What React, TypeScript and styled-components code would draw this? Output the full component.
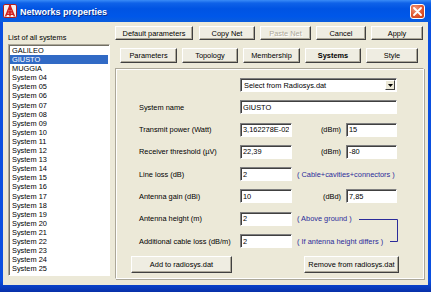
import React from 'react'
import styled, { createGlobalStyle } from 'styled-components'

const systems = [
    'GALILEO',
    'GIUSTO',
    'MUGGIA',
    ...Array.from({ length: 22 }, (_, i) => `System ${String(i + 4).padStart(2, '0')}`),
]

const GlobalStyle = createGlobalStyle`
    html, body {
        margin: 0;
        padding: 0;
    }
    body {
        width: 431px;
        height: 292px;
        overflow: hidden;
        font-family: "Liberation Sans", Arial, sans-serif;
    }
`

const App: React.FC = () => {
    return (
        <Window>
            <GlobalStyle />
            <TitleBar>
                <AppIcon />
                <Title>Networks properties</Title>
                <CloseButton>
                    <svg width="9" height="9" viewBox="0 0 9 9">
                        <path d="M1 1 L8 8 M8 1 L1 8" stroke="#fff" strokeWidth="1.8" strokeLinecap="round" />
                    </svg>
                </CloseButton>
            </TitleBar>
            <Body>
                <LeftColumn>
                    <Caption>List of all systems</Caption>
                    <SystemList>
                        {systems.map((name) => (
                            <ListItem key={name} $selected={name === 'GIUSTO'}>
                                {name}
                            </ListItem>
                        ))}
                    </SystemList>
                </LeftColumn>
                <RightColumn>
                    <ButtonRow>
                        <Button $w={78}>Default parameters</Button>
                        <Button $w={56}>Copy Net</Button>
                        <Button $w={51} $disabled>Paste Net</Button>
                        <Button $w={50}>Cancel</Button>
                        <Button $w={52}>Apply</Button>
                    </ButtonRow>
                    <TabRow>
                        <Button $w={57} $h={15}>Parameters</Button>
                        <Button $w={56} $h={15}>Topology</Button>
                        <Button $w={57} $h={15}>Membership</Button>
                        <Button $w={56} $h={15} $bold>Systems</Button>
                        <Button $w={52} $h={15}>Style</Button>
                    </TabRow>
                    <Panel>
                        <Form>
                            <Combo>
                                <span>Select from Radiosys.dat</span>
                                <ComboArrow>
                                    <svg width="5" height="3" viewBox="0 0 5 3">
                                        <path d="M0 0 H5 L2.5 3 Z" fill="#000" />
                                    </svg>
                                </ComboArrow>
                            </Combo>

                            <Label>System name</Label>
                            <Field $span={3} readOnly value="GIUSTO" />

                            <Label>Transmit power (Watt)</Label>
                            <Field readOnly value="3,162278E-02" />
                            <Unit>(dBm)</Unit>
                            <Field readOnly value="15" />

                            <Label>Receiver threshold (µV)</Label>
                            <Field readOnly value="22,39" />
                            <Unit>(dBm)</Unit>
                            <Field readOnly value="-80" />

                            <Label>Line loss (dB)</Label>
                            <Field readOnly value="2" />
                            <Note $row={5}>( Cable+cavities+connectors )</Note>

                            <Label>Antenna gain (dBi)</Label>
                            <Field readOnly value="10" />
                            <Unit>(dBd)</Unit>
                            <Field readOnly value="7,85" />

                            <Label>Antenna height (m)</Label>
                            <Field readOnly value="2" />
                            <Note $row={7}>( Above ground )</Note>

                            <Label>Additional cable loss (dB/m)</Label>
                            <Field readOnly value="2" />
                            <Note $row={8}>( If antenna height differs )</Note>

                            <Bracket width="40" height="37" viewBox="0 0 40 37">
                                <path d="M0 7.5 H38.5 V29.5 H31" fill="none" stroke="#2B2B9A" strokeWidth="1" />
                            </Bracket>
                        </Form>
                        <PanelButtons>
                            <Button $w={101} $h={17}>Add to radiosys.dat</Button>
                            <Button $w={95} $h={17}>Remove from radiosys.dat</Button>
                        </PanelButtons>
                    </Panel>
                </RightColumn>
            </Body>
        </Window>
    )
}

const AppIcon: React.FC = () => (
    <svg width="14" height="14" viewBox="0 0 14 14">
        <rect x="0.5" y="0.5" width="13" height="13" rx="1.5" fill="#F4F0F0" stroke="#B02020" />
        <path d="M7 1.5 L2.5 12.5 M7 1.5 L11.5 12.5 M4.3 8 H9.7 M3.5 10.3 H10.5 M7 1.5 V12.5" stroke="#D21E1E" strokeWidth="1.5" fill="none" />
        <circle cx="7" cy="2" r="1.2" fill="#D21E1E" />
    </svg>
)

export default App

const Window = styled.div`
    width: 431px;
    height: 292px;
    display: flex;
    flex-direction: column;
    background: linear-gradient(to bottom, #0A4FE0 0%, #0A4FE0 96%, #0830A8 100%);
`

const TitleBar = styled.div`
    height: 22px;
    flex-shrink: 0;
    display: flex;
    align-items: center;
    gap: 3px;
    padding: 0 6px 0 3px;
    background: linear-gradient(
        to bottom,
        #3A8CF7 0%,
        #0F62E8 14%,
        #0054E3 40%,
        #0057E9 75%,
        #0A5DDD 100%
    );
`

const Title = styled.div`
    flex: 1;
    color: #fff;
    font: 700 9px "Liberation Sans", Arial, sans-serif;
    text-shadow: 1px 1px 0 #0B2F8C;
    margin-top: 1px;
`

const CloseButton = styled.div`
    width: 15px;
    height: 15px;
    box-sizing: border-box;
    border: 1px solid #fff;
    border-radius: 3px;
    display: flex;
    align-items: center;
    justify-content: center;
    background: radial-gradient(circle at 35% 30%, #F09A7E 0%, #E0552E 55%, #C73A14 100%);
`

const Body = styled.div`
    flex: 1;
    display: flex;
    margin: 0 3px 7px 3px;
    padding-top: 4px;
    background: #ECE9D8;
`

const LeftColumn = styled.div`
    width: 102px;
    margin-left: 5px;
    padding-top: 7px;
    display: flex;
    flex-direction: column;
`

const Caption = styled.div`
    font-size: 7.4px;
    line-height: 9px;
    color: #000;
    margin-bottom: 2px;
`

const SystemList = styled.div`
    height: 232px;
    box-sizing: border-box;
    background: #fff;
    border: 1px solid;
    border-color: #ACA899 #fff #fff #ACA899;
    box-shadow: inset 1px 1px 0 #716F64;
    padding: 1px 1px 0 1px;
    overflow: hidden;
`

const ListItem = styled.div<{ $selected?: boolean }>`
    height: 9.1px;
    line-height: 9.1px;
    font-size: 7.4px;
    padding-left: 2px;
    color: ${(p) => (p.$selected ? '#fff' : '#000')};
    background: ${(p) => (p.$selected ? '#316AC5' : 'transparent')};
`

const RightColumn = styled.div`
    width: 309px;
    margin-left: 5px;
    display: flex;
    flex-direction: column;
`

const ButtonRow = styled.div`
    display: flex;
    gap: 5px;
    margin-bottom: 8px;
    & > :first-child {
        margin-right: 1px;
    }
`

const TabRow = styled.div`
    display: flex;
    gap: 5px;
    margin-left: 5px;
    margin-bottom: 5px;
`

const Button = styled.button<{ $w: number; $h?: number; $bold?: boolean; $disabled?: boolean }>`
    width: ${(p) => p.$w}px;
    height: ${(p) => p.$h ?? 14}px;
    flex-shrink: 0;
    box-sizing: border-box;
    padding: 0;
    margin: 0;
    font-family: "Liberation Sans", Arial, sans-serif;
    font-size: 7.4px;
    font-weight: ${(p) => (p.$bold ? 700 : 400)};
    color: ${(p) => (p.$disabled ? '#ACA899' : '#000')};
    text-shadow: ${(p) => (p.$disabled ? '1px 1px 0 #fff' : 'none')};
    background: #EFEDE2;
    border: 1px solid;
    border-color: #FFFFFF #404040 #404040 #FFFFFF;
    box-shadow: inset -1px -1px 0 #ACA899;
`

const Panel = styled.div`
    height: 211px;
    box-sizing: border-box;
    border: 1px solid;
    border-color: #ACA899 #fff #fff #ACA899;
    box-shadow: inset 1px 1px 0 #fff, 1px 1px 0 #ACA899;
    padding: 9px 0 0 15px;
    display: flex;
    flex-direction: column;
`

const Form = styled.div`
    margin-left: 8px;
    display: grid;
    grid-template-columns: 101px 52px 54px 51px;
    grid-auto-rows: 14px;
    row-gap: 8.3px;
    align-items: center;
`

const sunken = `
    box-sizing: border-box;
    height: 14px;
    background: #fff;
    border: 1px solid;
    border-color: #7F7F7F #fff #fff #7F7F7F;
    box-shadow: inset 1px 1px 0 #404040;
`

const Combo = styled.div`
    ${sunken}
    grid-column: 2 / span 3;
    display: flex;
    align-items: center;
    justify-content: space-between;
    padding: 0 1px 0 3px;
    font-size: 7.4px;
    color: #000;
`

const ComboArrow = styled.div`
    width: 10px;
    height: 10px;
    box-sizing: border-box;
    display: flex;
    align-items: center;
    justify-content: center;
    background: #ECE9D8;
    border: 1px solid;
    border-color: #fff #404040 #404040 #fff;
`

const Label = styled.div`
    grid-column: 1;
    font-size: 7.4px;
    color: #000;
    white-space: nowrap;
`

const Field = styled.input<{ $span?: number }>`
    ${sunken}
    grid-column: ${(p) => (p.$span ? `span ${p.$span}` : 'auto')};
    width: 100%;
    margin: 0;
    padding: 0 2px;
    outline: none;
    font-family: "Liberation Sans", Arial, sans-serif;
    font-size: 7.4px;
    color: #000;
`

const Unit = styled.div`
    font-size: 7.4px;
    color: #000;
    text-align: right;
    padding-right: 5px;
`

const Note = styled.div<{ $row: number }>`
    grid-column: 3 / span 2;
    grid-row: ${(p) => p.$row};
    margin-left: 5px;
    font-size: 7.4px;
    color: #2B2B9A;
    white-space: nowrap;
`

const Bracket = styled.svg`
    grid-column: 4;
    grid-row: 7 / span 2;
    justify-self: end;
    align-self: start;
    margin-right: -2px;
    overflow: visible;
`

const PanelButtons = styled.div`
    display: flex;
    justify-content: space-between;
    width: 268px;
    margin-top: 8px;
`
